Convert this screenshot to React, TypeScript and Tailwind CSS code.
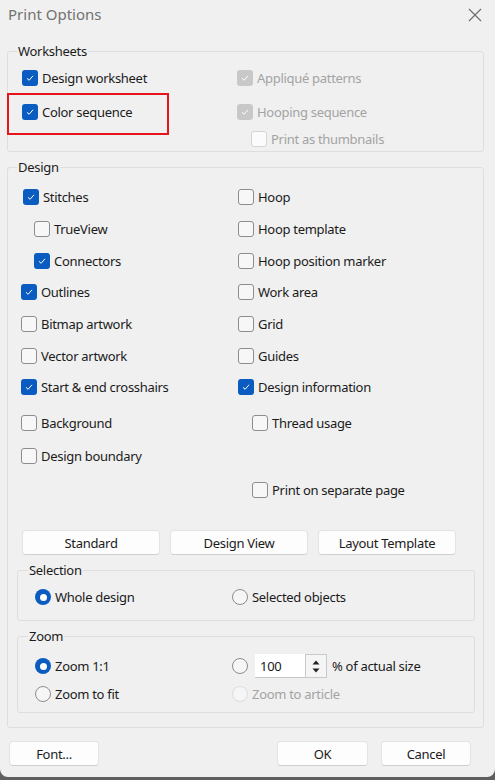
import React from "react";

const FONT = { fontFamily: '"Noto Sans", "Open Sans", sans-serif' };

function Check({ checked = false, disabled = false }: { checked?: boolean; disabled?: boolean }) {
  if (checked) {
    return (
      <span
        className={`flex h-[16px] w-[16px] shrink-0 items-center justify-center rounded-[3px] ${
          disabled ? "bg-[#c8c8c8]" : "bg-[#0a5cc0]"
        }`}
      >
        <svg width="10" height="10" viewBox="0 0 10 10">
          <path d="M2 5.3 L4.1 7.3 L8 2.8" fill="none" stroke="white" strokeWidth="1" />
        </svg>
      </span>
    );
  }
  return (
    <span
      className={`h-[16px] w-[16px] shrink-0 rounded-[3px] border ${
        disabled ? "border-[#d4d4d4] bg-[#fbfbfb]" : "border-[#8d8d8d] bg-[#f7f7f7]"
      }`}
    />
  );
}

function Radio({ checked = false, disabled = false }: { checked?: boolean; disabled?: boolean }) {
  if (checked) {
    return (
      <span className="flex h-[16px] w-[16px] shrink-0 items-center justify-center rounded-full bg-[#0a5cc0]">
        <span className="h-[7px] w-[7px] rounded-full bg-white" />
      </span>
    );
  }
  return (
    <span
      className={`h-[16px] w-[16px] shrink-0 rounded-full border ${
        disabled ? "border-[#dcdcdc] bg-[#f6f6f6]" : "border-[#8d8d8d] bg-[#f6f6f6]"
      }`}
    />
  );
}

function CB({
  label,
  checked,
  disabled,
}: {
  label: string;
  checked?: boolean;
  disabled?: boolean;
}) {
  return (
    <div className="flex items-center gap-[4px]">
      <Check checked={checked} disabled={disabled} />
      <span className={disabled ? "text-[#a3a3a3]" : "text-[#1b1b1b]"}>{label}</span>
    </div>
  );
}

function RB({ label, checked, disabled }: { label: string; checked?: boolean; disabled?: boolean }) {
  return (
    <div className="flex items-center gap-[4px]">
      <Radio checked={checked} disabled={disabled} />
      <span className={disabled ? "text-[#a3a3a3]" : "text-[#1b1b1b]"}>{label}</span>
    </div>
  );
}

function Btn({ children, w }: { children: React.ReactNode; w: string }) {
  return (
    <button
      className={`${w} h-[25px] rounded-[4px] border border-[#e3e3e3] border-b-[#cfcfcf] bg-[#fdfdfd] text-[13px] tracking-[-0.3px] text-[#1b1b1b]`}
    >
      {children}
    </button>
  );
}

export default function App() {
  const designRows: { h: string; left?: React.ReactNode; right?: React.ReactNode }[] = [
    {
      h: "h-[32px]",
      left: (
        <div className="pl-[2px]">
          <CB label="Stitches" checked />
        </div>
      ),
      right: <CB label="Hoop" />,
    },
    {
      h: "h-[32px]",
      left: (
        <div className="pl-[13px]">
          <CB label="TrueView" />
        </div>
      ),
      right: <CB label="Hoop template" />,
    },
    {
      h: "h-[31px]",
      left: (
        <div className="pl-[13px]">
          <CB label="Connectors" checked />
        </div>
      ),
      right: <CB label="Hoop position marker" />,
    },
    { h: "h-[32px]", left: <CB label="Outlines" checked />, right: <CB label="Work area" /> },
    { h: "h-[32px]", left: <CB label="Bitmap artwork" />, right: <CB label="Grid" /> },
    { h: "h-[31px]", left: <CB label="Vector artwork" />, right: <CB label="Guides" /> },
    {
      h: "h-[32px]",
      left: <CB label="Start & end crosshairs" checked />,
      right: <CB label="Design information" checked />,
    },
    {
      h: "h-[40px]",
      left: <CB label="Background" />,
      right: (
        <div className="pl-[14px]">
          <CB label="Thread usage" />
        </div>
      ),
    },
    { h: "h-[26px]", left: <CB label="Design boundary" /> },
    {
      h: "h-[42px]",
      right: (
        <div className="pl-[14px]">
          <CB label="Print on separate page" />
        </div>
      ),
    },
  ];

  return (
    <div className="h-[780px] w-[495px] overflow-hidden bg-[#5f5f5f]" style={FONT}>
      <div className="flex h-[777px] w-[495px] flex-col rounded-b-[8px] bg-[#f0f0f0] text-[13px] leading-[18px] tracking-[-0.3px]">
        {/* title bar */}
        <div className="flex h-[30px] items-center justify-between pl-[8px] pr-[13px]">
          <span className="-mt-[2px] text-[15px] tracking-normal text-[#727272]">Print Options</span>
          <svg width="14" height="14" viewBox="0 0 14 14">
            <path d="M1 1 L13 13 M13 1 L1 13" stroke="#6a6a6a" strokeWidth="1.1" fill="none" />
          </svg>
        </div>

        {/* Worksheets */}
        <fieldset className="relative ml-[7px] mt-[12px] w-[477px] rounded-[3px] border border-[#dedede] pb-[1px]">
          <legend className="ml-[9px] px-[1px] text-[#1b1b1b]">Worksheets</legend>
          <div className="grid grid-cols-[215px_1fr] pl-[14px]">
            <div className="flex h-[36px] items-center">
              <CB label="Design worksheet" checked />
            </div>
            <div className="flex h-[36px] items-center">
              <CB label="Appliqué patterns" checked disabled />
            </div>
            <div className="flex h-[32px] items-center">
              <CB label="Color sequence" checked />
            </div>
            <div className="flex h-[32px] items-center">
              <CB label="Hooping sequence" checked disabled />
            </div>
            <div className="h-[22px]" />
            <div className="flex h-[22px] items-center pl-[14px]">
              <CB label="Print as thumbnails" disabled />
            </div>
          </div>
          <div className="pointer-events-none absolute left-[-1px] top-[33px] h-[42px] w-[162px] border-2 border-[#e8141c]" />
        </fieldset>

        {/* Design */}
        <fieldset className="ml-[7px] mt-[6px] w-[477px] rounded-[3px] border border-[#dedede] pb-[14px]">
          <legend className="ml-[9px] px-[1px] text-[#1b1b1b]">Design</legend>
          <div className="pl-[13px] pt-[5px]">
            {designRows.map((r, i) => (
              <div key={i} className={`grid grid-cols-[217px_1fr] items-center ${r.h}`}>
                <div>{r.left}</div>
                <div>{r.right}</div>
              </div>
            ))}
          </div>

          <div className="mt-[19px] flex gap-[10px] pl-[14px]">
            <Btn w="w-[138px]">Standard</Btn>
            <Btn w="w-[138px]">Design View</Btn>
            <Btn w="w-[138px]">Layout Template</Btn>
          </div>

          {/* Selection */}
          <fieldset className="ml-[9px] mt-[6px] w-[458px] rounded-[3px] border border-[#dedede] pb-[5px]">
            <legend className="ml-[10px] px-[1px] text-[#1b1b1b]">Selection</legend>
            <div className="grid h-[36px] grid-cols-[197px_1fr] items-center pl-[17px]">
              <RB label="Whole design" checked />
              <RB label="Selected objects" />
            </div>
          </fieldset>

          {/* Zoom */}
          <fieldset className="ml-[9px] mt-[6px] w-[458px] rounded-[3px] border border-[#dedede] pb-[4px]">
            <legend className="ml-[10px] px-[1px] text-[#1b1b1b]">Zoom</legend>
            <div className="grid grid-cols-[197px_1fr] pl-[17px] pt-[7px]">
              <div className="flex h-[28px] items-center">
                <RB label="Zoom 1:1" checked />
              </div>
              <div className="flex h-[28px] items-center">
                <Radio />
                <div className="ml-[7px] flex h-[24px] items-stretch">
                  <div className="flex w-[50px] items-center border-b border-[#c7c7c7] bg-white pl-[5px] text-[#1b1b1b]">
                    100
                  </div>
                  <div className="flex w-[22px] flex-col items-center justify-center gap-[3px] border border-[#c9c9c9] bg-[#f5f5f5]">
                    <svg width="8" height="5" viewBox="0 0 8 5">
                      <path d="M0.5 4.5 L4 0.5 L7.5 4.5 Z" fill="#222" />
                    </svg>
                    <svg width="8" height="5" viewBox="0 0 8 5">
                      <path d="M0.5 0.5 L4 4.5 L7.5 0.5 Z" fill="#222" />
                    </svg>
                  </div>
                  <span className="ml-[5px] flex items-center text-[#1b1b1b]">% of actual size</span>
                </div>
              </div>
              <div className="flex h-[28px] items-center">
                <RB label="Zoom to fit" />
              </div>
              <div className="flex h-[28px] items-center">
                <RB label="Zoom to article" disabled />
              </div>
            </div>
          </fieldset>
        </fieldset>

        {/* bottom buttons */}
        <div className="mt-[13px] flex pl-[9px]">
          <Btn w="w-[90px]">Font...</Btn>
          <div className="ml-[178px] flex gap-[13px]">
            <Btn w="w-[91px]">OK</Btn>
            <Btn w="w-[90px]">Cancel</Btn>
          </div>
        </div>
      </div>
    </div>
  );
}
